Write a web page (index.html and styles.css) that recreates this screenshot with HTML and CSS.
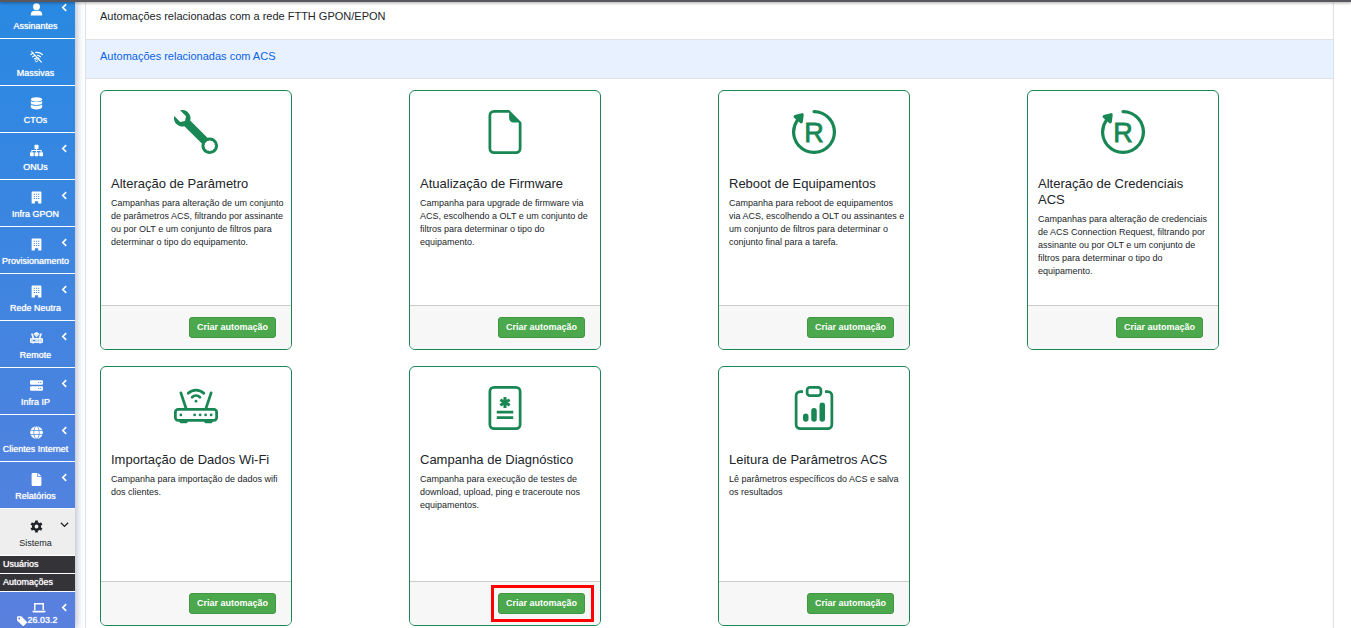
FILE: index.html
```html
<!DOCTYPE html>
<html lang="pt-BR">
<head>
<meta charset="utf-8">
<title>Automações</title>
<link rel="stylesheet" href="styles.css">
</head>
<body>
<svg class="defs" aria-hidden="true">
  <symbol id="chev" viewBox="0 0 8 8"><path d="M5.500 1 2.500 4l3 3" fill="none" stroke="currentColor" stroke-width="1.500"/></symbol>
  <symbol id="chev-down" viewBox="0 0 8 8"><path d="M.8 2.500 4 5.700l3.200-3.200" fill="none" stroke="currentColor" stroke-width="1.200"/></symbol>
  <symbol id="user" viewBox="0 0 16 16"><circle cx="8" cy="4.500" r="4.200"/><path d="M1 15.500V14c0-3 2-4.500 4.500-4.500h5C13 9.500 15 11 15 14v1.500z"/></symbol>
  <symbol id="wifi-off" viewBox="0 0 16 16"><g fill="none" stroke="currentColor" stroke-width="1.400" stroke-linecap="round"><path d="M2 2l12 13M7 3c3-.3 6 .6 8.300 2.600M1 5.600l2.500-1.500M3.200 8.300l2.600-1.500M9 6.500c1.500.2 2.800.8 3.900 1.800M5.500 10.800l2.500-1M10.500 9.800l.4.800"/></g><circle cx="8" cy="13" r="1.500" fill="none" stroke="currentColor"/></symbol>
  <symbol id="db" viewBox="0 0 16 16"><ellipse cx="8" cy="3" rx="7" ry="2.800"/><path d="M1 4.800c2 2 12 2 14 0v3c-1 2.600-13 2.600-14 0zM1 9.200c2 2 12 2 14 0v3.500c-1 3.400-13 3.400-14 0z"/></symbol>
  <symbol id="sitemap" viewBox="0 0 16 16"><rect x="5.500" y="1" width="5" height="5" rx=".8"/><rect x="0" y="10" width="4.600" height="5" rx=".8"/><rect x="5.700" y="10" width="4.600" height="5" rx=".8"/><rect x="11.400" y="10" width="4.600" height="5" rx=".8"/><path d="M2.300 10V8h11.400v2M8 5v5" fill="none" stroke="currentColor" stroke-width="1.300"/></symbol>
  <symbol id="building" viewBox="0 0 16 16"><path fill-rule="evenodd" d="M3 .5h10q1 0 1 1v14h-4v-3H6v3H2v-14q0-1 1-1zM4.500 3.500v1.200h1.500V3.500zm2.800 0v1.200h1.500V3.500zm2.700 0v1.200h1.500V3.500zM4.500 6v1.200h1.500V6zm2.800 0v1.200h1.500V6zm2.700 0v1.200h1.500V6zM4.500 8.500v1.200h1.500V8.500zm2.800 0v1.200h1.500V8.500zm2.700 0v1.200h1.500V8.500z"/></symbol>
  <symbol id="server" viewBox="0 0 16 16"><path fill-rule="evenodd" d="M1.500 1.500h13q1.500 0 1.500 1.500v2.500q0 1.500-1.500 1.500h-13Q0 7 0 5.500V3q0-1.500 1.500-1.500zM10 3.700v1.200h1.300V3.700zm2.600 0v1.200h1.300V3.700zM1.500 9h13q1.500 0 1.500 1.500V13q0 1.500-1.500 1.500h-13Q0 14.500 0 13v-2.500Q0 9 1.500 9zm8.500 2.200v1.200h1.300v-1.200zm2.600 0v1.200h1.300v-1.200z"/></symbol>
  <symbol id="globe" viewBox="0 0 16 16"><circle cx="8" cy="8" r="7.800"/><g fill="none" stroke="#4a86de" stroke-width=".9"><ellipse cx="8" cy="8" rx="3.300" ry="7.800"/><path d="M0 5.500h16M0 10.500h16"/></g></symbol>
  <symbol id="doc" viewBox="0 0 16 16"><path d="M3.500 0H9v5h5v9.500q0 1.500-1.500 1.500h-9Q2 16 2 14.500v-13Q2 0 3.500 0zM10 0l4 4h-4z"/></symbol>
  <symbol id="gear" viewBox="0 0 16 16"><circle cx="8" cy="8" r="4" fill="none" stroke="currentColor" stroke-width="3.200"/><path d="M8 .5v3M8 12.500v3M1.500 4.250l2.600 1.500M11.900 10.250l2.600 1.500M1.500 11.750l2.600-1.500M11.900 5.750l2.600-1.500" stroke="currentColor" stroke-width="3.400"/></symbol>
  <symbol id="laptop" viewBox="0 0 16 16"><path d="M2.800 11.500V3.500h10.400v8" fill="none" stroke="currentColor" stroke-width="1.800"/><path d="M0 12h16v.8q0 1.200-1.500 1.200h-13Q0 14 0 12.800z"/></symbol>
  <symbol id="tag" viewBox="0 0 16 16"><path fill-rule="evenodd" d="M0 2q0-1.500 1.500-1.500H7L15.500 9q1 1 0 2L11 15.500q-1 1-2 0L0 7zm3.500.5a1.500 1.500 0 1 0 0 3 1.500 1.500 0 0 0 0-3z"/></symbol>
  <symbol id="wrench" viewBox="0 0 16 16"><path d="M.102 2.223A3.004 3.004 0 0 0 3.780 5.897l6.341 6.252A3.003 3.003 0 0 0 13 16a3 3 0 1 0-.851-5.878L5.897 3.781A3.004 3.004 0 0 0 2.223.1l2.141 2.142L4 4l-1.757.364zm13.370 9.019.528.026.287.445.445.287.026.529L15 13l-.242.471-.026.529-.445.287-.287.445-.529.026L13 15l-.471-.242-.529-.026-.287-.445-.445-.287-.026-.529L11 13l.242-.471.026-.529.445-.287.287-.445.529-.026L13 11z"/></symbol>
  <symbol id="file" viewBox="0 0 16 16"><path d="M14 4.500V14a2 2 0 0 1-2 2H4a2 2 0 0 1-2-2V2a2 2 0 0 1 2-2h5.500zm-3 0A1.500 1.500 0 0 1 9.500 3V1H4a1 1 0 0 0-1 1v12a1 1 0 0 0 1 1h8a1 1 0 0 0 1-1V4.500z"/></symbol>
  <symbol id="reboot" viewBox="0 0 16 16"><path d="M1.161 8a6.840 6.840 0 1 0 6.842-6.840.58.58 0 1 1 0-1.160 8 8 0 1 1-6.556 3.412l-.663-.577a.58.58 0 0 1 .227-.997l2.520-.69a.58.58 0 0 1 .728.633l-.332 2.592a.58.58 0 0 1-.956.364l-.643-.56A6.800 6.800 0 0 0 1.160 8z"/></symbol>
  <symbol id="router" viewBox="0 0 16 16"><path d="M5.525 3.025a3.500 3.500 0 0 1 4.950 0 .5.5 0 1 0 .707-.707 4.500 4.500 0 0 0-6.364 0 .5.5 0 0 0 .707.707"/><path d="M6.940 4.440a1.500 1.500 0 0 1 2.120 0 .5.5 0 0 0 .708-.708 2.500 2.500 0 0 0-3.536 0 .5.5 0 0 0 .707.707ZM2.500 11a.5.5 0 1 1 0-1 .5.5 0 0 1 0 1m4.500-.5a.5.5 0 1 0 1 0 .5.5 0 0 0-1 0m2.500.5a.5.5 0 1 1 0-1 .5.5 0 0 1 0 1m1.500-.5a.5.5 0 1 0 1 0 .5.5 0 0 0-1 0m2 0a.5.5 0 1 0 1 0 .5.5 0 0 0-1 0"/><path d="M2.974 2.342a.5.5 0 1 0-.948.316L3.806 8H1.500A1.500 1.500 0 0 0 0 9.500v2A1.500 1.500 0 0 0 1.500 13H2a.5.5 0 0 0 .5.5h2A.5.5 0 0 0 5 13h6a.5.5 0 0 0 .5.5h2a.5.5 0 0 0 .5-.5h.5a1.500 1.500 0 0 0 1.500-1.500v-2A1.500 1.500 0 0 0 14.500 8h-2.306l1.780-5.342a.5.5 0 1 0-.948-.316L11.140 8H4.860zM14.500 9a.5.5 0 0 1 .5.5v2a.5.5 0 0 1-.5.5h-13a.5.5 0 0 1-.5-.5v-2a.5.5 0 0 1 .5-.5z"/><path d="M8.500 5.500a.5.5 0 1 1-1 0 .5.5 0 0 1 1 0"/></symbol>
  <symbol id="medical" viewBox="0 0 16 16"><path fill-rule="evenodd" d="M4 0a2 2 0 0 0-2 2v12a2 2 0 0 0 2 2h8a2 2 0 0 0 2-2V2a2 2 0 0 0-2-2zm0 1h8a1 1 0 0 1 1 1v12a1 1 0 0 1-1 1H4a1 1 0 0 1-1-1V2a1 1 0 0 1 1-1z"/><g fill="none" stroke="currentColor" stroke-width="1"><path stroke-width="1.100" d="M8 4v4M6.300 5l3.400 2M6.300 7l3.400-2"/><path d="M5 9.500h6M5 11.500h6"/></g></symbol>
  <symbol id="clipboard" viewBox="0 0 16 16"><path d="M4 11a1 1 0 1 1 2 0v1a1 1 0 1 1-2 0zm6-4a1 1 0 1 1 2 0v5a1 1 0 1 1-2 0zM7 9a1 1 0 0 1 2 0v3a1 1 0 1 1-2 0z"/><path d="M4 1.500H3a2 2 0 0 0-2 2V14a2 2 0 0 0 2 2h10a2 2 0 0 0 2-2V3.500a2 2 0 0 0-2-2h-1v1h1a1 1 0 0 1 1 1V14a1 1 0 0 1-1 1H3a1 1 0 0 1-1-1V3.500a1 1 0 0 1 1-1h1z"/><path d="M9.500 1a.5.5 0 0 1 .5.5v1a.5.5 0 0 1-.5.5h-3a.5.5 0 0 1-.5-.5v-1a.5.5 0 0 1 .5-.5zm-3-1A1.500 1.500 0 0 0 5 1.500v1A1.500 1.500 0 0 0 6.500 4h3A1.500 1.500 0 0 0 11 2.500v-1A1.500 1.500 0 0 0 9.500 0z"/></symbol>
</svg>

<div class="topbar"></div>
<div class="layout">
  <nav class="sidebar">
    <a class="item" href="#"><svg class="ico"><use href="#user"/></svg><svg class="chev"><use href="#chev"/></svg>Assinantes</a>
    <a class="item" href="#"><svg class="ico"><use href="#wifi-off"/></svg>Massivas</a>
    <a class="item" href="#"><svg class="ico"><use href="#db"/></svg>CTOs</a>
    <a class="item" href="#"><svg class="ico"><use href="#sitemap"/></svg><svg class="chev"><use href="#chev"/></svg>ONUs</a>
    <a class="item" href="#"><svg class="ico"><use href="#building"/></svg><svg class="chev"><use href="#chev"/></svg>Infra GPON</a>
    <a class="item" href="#"><svg class="ico"><use href="#building"/></svg><svg class="chev"><use href="#chev"/></svg>Provisionamento</a>
    <a class="item" href="#"><svg class="ico"><use href="#building"/></svg><svg class="chev"><use href="#chev"/></svg>Rede Neutra</a>
    <a class="item" href="#"><svg class="ico ico-bold"><use href="#router"/></svg><svg class="chev"><use href="#chev"/></svg>Remote</a>
    <a class="item" href="#"><svg class="ico"><use href="#server"/></svg><svg class="chev"><use href="#chev"/></svg>Infra IP</a>
    <a class="item" href="#"><svg class="ico"><use href="#globe"/></svg><svg class="chev"><use href="#chev"/></svg>Clientes Internet</a>
    <a class="item" href="#"><svg class="ico"><use href="#doc"/></svg><svg class="chev"><use href="#chev"/></svg>Relatórios</a>
    <a class="item item-open" href="#"><svg class="ico"><use href="#gear"/></svg><svg class="chev"><use href="#chev-down"/></svg>Sistema</a>
    <a class="subitem" href="#">Usuários</a>
    <a class="subitem" href="#">Automações</a>
    <a class="item item-version" href="#"><svg class="ico"><use href="#laptop"/></svg><svg class="chev"><use href="#chev"/></svg><span class="version"><svg class="tag"><use href="#tag"/></svg>26.03.2</span></a>
  </nav>

  <main class="content">
    <button class="section" type="button">Automações relacionadas com a rede FTTH GPON/EPON</button>
    <button class="section section-open" type="button">Automações relacionadas com ACS</button>
    <div class="cards">
      <article class="card">
        <div class="card-body"><svg class="card-icon"><use href="#wrench"/></svg>
          <h2 class="card-title">Alteração de Parâmetro</h2>
          <p class="card-text">Campanhas para alteração de um conjunto de parâmetros ACS, filtrando por assinante ou por OLT e um conjunto de filtros para determinar o tipo do equipamento.</p></div>
        <div class="card-footer"><button class="create" type="button">Criar automação</button></div>
      </article>
      <article class="card">
        <div class="card-body"><svg class="card-icon"><use href="#file"/></svg>
          <h2 class="card-title">Atualização de Firmware</h2>
          <p class="card-text">Campanha para upgrade de firmware via ACS, escolhendo a OLT e um conjunto de filtros para determinar o tipo do equipamento.</p></div>
        <div class="card-footer"><button class="create" type="button">Criar automação</button></div>
      </article>
      <article class="card">
        <div class="card-body"><svg class="card-icon" viewBox="0 0 44 44"><use href="#reboot"/><text class="letter" x="22" y="32" text-anchor="middle">R</text></svg>
          <h2 class="card-title">Reboot de Equipamentos</h2>
          <p class="card-text">Campanha para reboot de equipamentos via ACS, escolhendo a OLT ou assinantes e um conjunto de filtros para determinar o conjunto final para a tarefa.</p></div>
        <div class="card-footer"><button class="create" type="button">Criar automação</button></div>
      </article>
      <article class="card">
        <div class="card-body"><svg class="card-icon" viewBox="0 0 44 44"><use href="#reboot"/><text class="letter" x="22" y="32" text-anchor="middle">R</text></svg>
          <h2 class="card-title">Alteração de Credenciais ACS</h2>
          <p class="card-text">Campanhas para alteração de credenciais de ACS Connection Request, filtrando por assinante ou por OLT e um conjunto de filtros para determinar o tipo do equipamento.</p></div>
        <div class="card-footer"><button class="create" type="button">Criar automação</button></div>
      </article>
      <article class="card">
        <div class="card-body"><svg class="card-icon"><use href="#router"/></svg>
          <h2 class="card-title">Importação de Dados Wi-Fi</h2>
          <p class="card-text">Campanha para importação de dados wifi dos clientes.</p></div>
        <div class="card-footer"><button class="create" type="button">Criar automação</button></div>
      </article>
      <article class="card">
        <div class="card-body"><svg class="card-icon"><use href="#medical"/></svg>
          <h2 class="card-title">Campanha de Diagnóstico</h2>
          <p class="card-text">Campanha para execução de testes de download, upload, ping e traceroute nos equipamentos.</p></div>
        <div class="card-footer"><button class="create create-marked" type="button">Criar automação</button></div>
      </article>
      <article class="card">
        <div class="card-body"><svg class="card-icon"><use href="#clipboard"/></svg>
          <h2 class="card-title">Leitura de Parâmetros ACS</h2>
          <p class="card-text">Lê parâmetros específicos do ACS e salva os resultados</p></div>
        <div class="card-footer"><button class="create" type="button">Criar automação</button></div>
      </article>
    </div>
  </main>
</div>
</body>
</html>
```
FILE: styles.css
```css
* { box-sizing: border-box; }

body {
  margin: 0;
  height: 100vh;
  overflow: hidden;
  background: #fff;
  color: #212529;
  font-family: "Liberation Sans", Arial, sans-serif;
}

button { font-family: inherit; }
svg { fill: currentColor; }
.defs { position: absolute; width: 0; height: 0; }

.topbar {
  position: fixed;
  z-index: 2;
  top: 0;
  left: 0;
  right: 0;
  height: 2px;
  background: #58585e;
  box-shadow: 0 1px 3px rgba(0, 0, 0, .4);
}

.layout {
  display: flex;
  gap: 10px;
  min-height: 100vh;
}

/* Sidebar */
.sidebar {
  flex: 0 0 75px;
  display: flex;
  flex-direction: column;
  height: 100vh;
  overflow: hidden;
  background: linear-gradient(#2989e2, #5a80de);
  box-shadow: 1px 0 8px rgba(60, 80, 120, .45);
}

.item {
  position: relative;
  flex: none;
  display: flex;
  flex-direction: column;
  align-items: center;
  gap: 4px;
  height: 47px;
  padding: 11px 4px 0 0;
  border-bottom: 1px solid #fff;
  color: #fff;
  font-size: 9px;
  line-height: 12px;
  text-decoration: none;
  text-shadow: 0 0 1px #fff;
  white-space: nowrap;
}

.item:first-child { margin-top: -8px; }
.ico { width: 13px; height: 13px; margin-left: 2px; }
.ico-bold { stroke: currentColor; stroke-width: 1px; }

.chev {
  position: absolute;
  top: 11px;
  right: 6px;
  width: 9px;
  height: 9px;
}

.item-open { background: #eee; color: #212529; text-shadow: none; }

.subitem {
  flex: none;
  height: 18px;
  padding-left: 3px;
  border-bottom: 1px solid #fff;
  background: #343338;
  color: #fff;
  font-size: 9px;
  line-height: 17px;
  text-decoration: none;
  text-shadow: 0 0 1px #fff;
}

.item-version { padding: 9px 0 0; gap: 0; }
.item-version .ico { width: 16px; height: 13px; }
.version { display: flex; align-items: center; font-size: 9px; line-height: 13px; }
.tag { width: 10px; height: 10px; }

/* Accordion */
.content {
  flex: 1;
  display: flex;
  flex-direction: column;
  margin-right: 17px;
  border: solid #dee2e6;
  border-width: 0 1px;
}

.section {
  padding: 10px 14px 16px;
  border: 0;
  border-bottom: 1px solid #dee2e6;
  background: #fff;
  color: #212529;
  font-size: 11px;
  line-height: 13px;
  text-align: left;
}

.section-open {
  padding-bottom: 15px;
  background: #e7f1ff;
  color: #0c63e4;
}

.cards {
  display: grid;
  grid-template-columns: repeat(4, 1fr);
  gap: 16px;
  padding: 11px 13px 11px 14px;
}

.card {
  display: flex;
  flex-direction: column;
  width: 192px;
  min-height: 260px;
  border: 1px solid #198754;
  border-radius: 6px;
}

.card-body {
  flex: 1;
  display: flex;
  flex-direction: column;
  padding: 19px 4px 10px 10px;
}

.card-icon {
  width: 44px;
  height: 44px;
  margin: 0 6px 22px 0;
  align-self: center;
  color: #198754;
}

.letter { font: 27px "Liberation Sans", Arial, sans-serif; stroke: currentColor; stroke-width: .8px; }

.card-title {
  margin: 0 0 5px;
  padding-right: 10px;
  font-size: 13px;
  font-weight: 400;
  line-height: 16px;
}

.card-text {
  margin: 0;
  font-size: 9px;
  line-height: 13px;
}

.card-footer {
  display: flex;
  justify-content: flex-end;
  padding: 11px 15px;
  border-top: 1px solid #c9cccb;
  border-radius: 0 0 5px 5px;
  background: #f7f7f7;
}

.create {
  position: relative;
  padding: 3px 7px;
  border: 1px solid #419641;
  border-radius: 3px;
  background: #4ba84c;
  color: #fff;
  font-size: 9px;
  font-weight: 700;
  line-height: 13px;
  white-space: nowrap;
}

.create-marked::after {
  content: "";
  position: absolute;
  inset: -9px -10px -9px -8px;
  border: 3px solid #f00;
}
```
